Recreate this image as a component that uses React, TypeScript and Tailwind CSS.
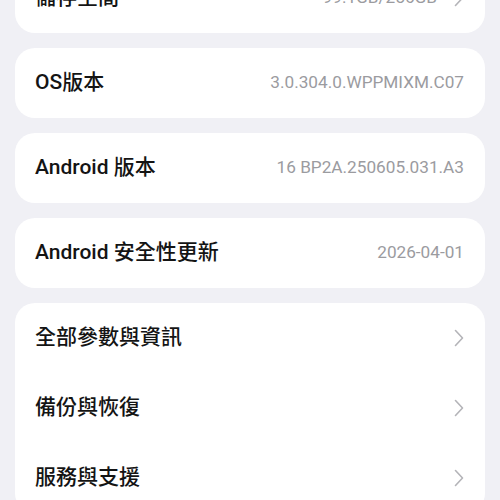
import React from "react";

const font = { fontFamily: '"Roboto", "Noto Sans CJK TC", sans-serif' };

function Chevron() {
  return (
    <svg width="10" height="18" viewBox="0 0 10 18" className="shrink-0">
      <path d="M1.5 1.5 L8.5 9 L1.5 16.5" fill="none" stroke="#b4b4b8" strokeWidth="1.6" strokeLinecap="round" strokeLinejoin="round" />
    </svg>
  );
}

function Row({ label, value, chevron }: { label: string; value?: string; chevron?: boolean }) {
  return (
    <div className="flex h-[70px] items-center justify-between pl-[20px] pr-[21px]">
      <span className="text-[21px] font-medium text-[#141414]">{label}</span>
      <div className="flex items-center gap-[17px]">
        {value && <span className="text-[17.2px] text-[#9b9b9f]">{value}</span>}
        {chevron && <Chevron />}
      </div>
    </div>
  );
}

export default function App() {
  return (
    <div className="h-[500px] w-[500px] overflow-hidden bg-[#f0f0f5]" style={font}>
      <div className="mt-[-37px] flex flex-col gap-[15px] px-[15px]">
        <div className="rounded-[20px] bg-white">
          <Row label="儲存空間" value="99.1GB/256GB" chevron />
        </div>
        <div className="rounded-[20px] bg-white">
          <Row label="OS版本" value="3.0.304.0.WPPMIXM.C07" />
        </div>
        <div className="rounded-[20px] bg-white">
          <Row label="Android 版本" value="16 BP2A.250605.031.A3" />
        </div>
        <div className="rounded-[20px] bg-white">
          <Row label="Android 安全性更新" value="2026-04-01" />
        </div>
        <div className="rounded-[20px] bg-white">
          <Row label="全部參數與資訊" chevron />
          <Row label="備份與恢復" chevron />
          <Row label="服務與支援" chevron />
        </div>
      </div>
    </div>
  );
}
